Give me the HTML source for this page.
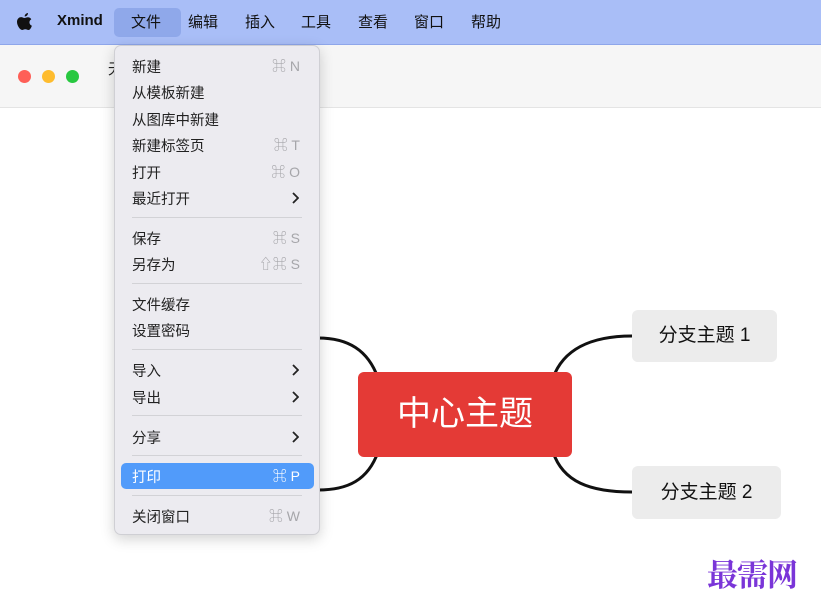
<!DOCTYPE html>
<html><head><meta charset="utf-8"><style>
*{margin:0;padding:0;box-sizing:border-box}
body{width:821px;height:603px;overflow:hidden;background:#fff;font-family:"Liberation Sans","Noto Sans CJK SC",sans-serif;position:relative}
.mb{position:absolute;left:0;top:0;width:821px;height:45px;background:#a9bef7;border-bottom:1px solid #8ea6ea}
.mb span{position:absolute;top:11px;font-size:15px;color:#111}
.sel{position:absolute;left:114px;top:8px;width:67px;height:29px;background:#8fa8ea;border-radius:5px}
.tb{position:absolute;left:0;top:45px;width:821px;height:63px;background:#f6f6f6;border-bottom:1px solid #e4e4e4}
.dot{position:absolute;top:70px;width:13px;height:13px;border-radius:50%}
.menu{position:absolute;left:114px;top:45px;width:206px;height:490px;background:#ecebf0;border:1px solid #cfcfd4;border-radius:7px;box-shadow:0 4px 14px rgba(0,0,0,.18)}
.it{position:absolute;left:17px;font-size:14.5px;color:#222}
.k{position:absolute;right:19px;font-size:14px;color:#a6a6aa}
.ar{position:absolute;right:20px;width:7px;height:12px}
.sep{position:absolute;left:17px;width:170px;height:1px;background:#d2d2d6}
.hl{position:absolute;left:6px;top:417px;width:193px;height:26px;background:#519bfa;border-radius:5px}
</style></head><body>
<div class="mb">
<div class="sel"></div>
<svg style="position:absolute;left:16px;top:12px" width="17" height="20" viewBox="0 0 17 20"><path d="M12 1c0 2-1.5 3.5-3.3 3.5C8.6 2.6 10.2 1.1 12 1z M8.5 6c1 0 2-.8 3.3-.8 1.5 0 2.8.8 3.5 2-2.8 1.6-2.3 5.5.6 6.5-.6 1.7-1.8 4.3-3.4 4.3-1.3 0-1.6-.8-3.2-.8-1.6 0-2 .8-3.2.8C4.2 18 1 13.7 1 10c0-3.3 2.2-4.9 4.2-4.9 1.4 0 2.3.9 3.3.9z" fill="#111"/></svg>
<span style="left:57px;font-weight:bold;top:12px">Xmind</span>
<span style="left:131px">文件</span><span style="left:188px">编辑</span><span style="left:245px">插入</span><span style="left:301px">工具</span><span style="left:358px">查看</span><span style="left:414px">窗口</span><span style="left:471px">帮助</span>
</div>
<div class="tb"></div>
<div class="dot" style="left:18px;background:#fe5f57"></div>
<div class="dot" style="left:42px;background:#febc2e"></div>
<div class="dot" style="left:66px;background:#28c840"></div>
<span style="position:absolute;left:108px;top:58px;font-size:15px;color:#222">无</span>
<svg style="position:absolute;left:0;top:0" width="821" height="603">
<g fill="none" stroke="#111" stroke-width="3">
<path d="M378 378 C368 350 348 338 318 338"/>
<path d="M378 452 C368 480 348 490 318 490"/>
<path d="M553 378 C563 350 590 336 632 336"/>
<path d="M553 452 C563 482 590 492 632 492"/>
</g></svg>
<div style="position:absolute;left:358px;top:372px;width:214px;height:85px;background:#e43a36;border-radius:6px;color:#fff;font-size:34px;text-align:center;line-height:85px">中心主题</div>
<div style="position:absolute;left:632px;top:310px;width:145px;height:52px;background:#ececec;border-radius:6px;font-size:19px;text-align:center;line-height:52px;color:#111">分支主题 1</div>
<div style="position:absolute;left:632px;top:466px;width:149px;height:53px;background:#ececec;border-radius:6px;font-size:19px;text-align:center;line-height:53px;color:#111">分支主题 2</div>
<div class="menu">
<div class="hl"></div>
<span class="it" style="top:10px">新建</span><span class="k" style="top:10px">⌘ N</span>
<span class="it" style="top:36px">从模板新建</span>
<span class="it" style="top:63px">从图库中新建</span>
<span class="it" style="top:89px">新建标签页</span><span class="k" style="top:89px">⌘ T</span>
<span class="it" style="top:116px">打开</span><span class="k" style="top:116px">⌘ O</span>
<span class="it" style="top:142px">最近打开</span><svg class="ar" style="top:146px" viewBox="0 0 7 12"><path d="M1 1l5 5-5 5" fill="none" stroke="#222" stroke-width="1.8"/></svg>
<div class="sep" style="top:171px"></div>
<span class="it" style="top:182px">保存</span><span class="k" style="top:182px">⌘ S</span>
<span class="it" style="top:208px">另存为</span><span class="k" style="top:208px">⇧⌘ S</span>
<div class="sep" style="top:237px"></div>
<span class="it" style="top:248px">文件缓存</span>
<span class="it" style="top:274px">设置密码</span>
<div class="sep" style="top:303px"></div>
<span class="it" style="top:314px">导入</span><svg class="ar" style="top:318px" viewBox="0 0 7 12"><path d="M1 1l5 5-5 5" fill="none" stroke="#222" stroke-width="1.8"/></svg>
<span class="it" style="top:341px">导出</span><svg class="ar" style="top:345px" viewBox="0 0 7 12"><path d="M1 1l5 5-5 5" fill="none" stroke="#222" stroke-width="1.8"/></svg>
<div class="sep" style="top:369px"></div>
<span class="it" style="top:381px">分享</span><svg class="ar" style="top:385px" viewBox="0 0 7 12"><path d="M1 1l5 5-5 5" fill="none" stroke="#222" stroke-width="1.8"/></svg>
<div class="sep" style="top:409px"></div>
<span class="it" style="top:420px;color:#fff">打印</span><span class="k" style="top:420px;color:#fff">⌘ P</span>
<div class="sep" style="top:449px"></div>
<span class="it" style="top:460px">关闭窗口</span><span class="k" style="top:460px">⌘ W</span>
</div>
<div style="position:absolute;left:707px;top:550px;font-family:'Noto Serif CJK SC',serif;font-weight:bold;font-size:31px;color:#7a35d8;letter-spacing:-1px">最需网</div>
</body></html>
